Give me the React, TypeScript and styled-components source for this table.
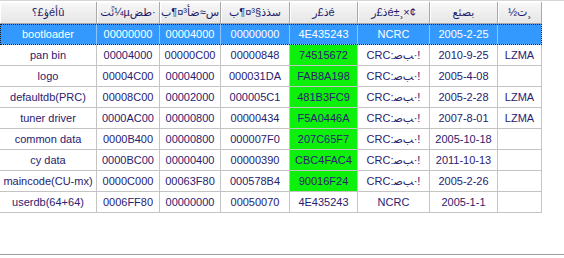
import styled, { createGlobalStyle } from "styled-components";

type Entry = {
  name: string;
  start: string;
  size: string;
  length: string;
  crc: string;
  check: string;
  date: string;
  pack: string;
};

const OK = "CRC:ص\u200Eب·!";

const COLUMNS = [
  "ؤ£؟éأû",
  "ئًت¼µطض·",
  "س≈ضأ³¤¶ب",
  "سذذ§³¤¶ب",
  "ذ£رé",
  "ذ£رé±¸×¢",
  "بصئع",
  "\u200E½\u200Eت\u200E¸",
];

const ENTRIES: Entry[] = [
  { name: "bootloader", start: "00000000", size: "00004000", length: "00000000", crc: "4E435243", check: "NCRC", date: "2005-2-25", pack: "" },
  { name: "pan bin", start: "00004000", size: "00000C00", length: "00000848", crc: "74515672", check: OK, date: "2010-9-25", pack: "LZMA" },
  { name: "logo", start: "00004C00", size: "00004000", length: "000031DA", crc: "FAB8A198", check: OK, date: "2005-4-08", pack: "" },
  { name: "defaultdb(PRC)", start: "00008C00", size: "00002000", length: "000005C1", crc: "481B3FC9", check: OK, date: "2005-2-28", pack: "LZMA" },
  { name: "tuner driver", start: "0000AC00", size: "00000800", length: "00000434", crc: "F5A0446A", check: OK, date: "2007-8-01", pack: "LZMA" },
  { name: "common data", start: "0000B400", size: "00000800", length: "000007F0", crc: "207C65F7", check: OK, date: "2005-10-18", pack: "" },
  { name: "cy data", start: "0000BC00", size: "00000400", length: "00000390", crc: "CBC4FAC4", check: OK, date: "2011-10-13", pack: "" },
  { name: "maincode(CU-mx)", start: "0000C000", size: "00063F80", length: "000578B4", crc: "90016F24", check: OK, date: "2005-2-26", pack: "" },
  { name: "userdb(64+64)", start: "0006FF80", size: "00000000", length: "00050070", crc: "4E435243", check: "NCRC", date: "2005-1-1", pack: "" },
];

const GRID = "97px 63px 61px 69px 68px 72px 68px 44px";

const Global = createGlobalStyle`
  html, body {
    margin: 0;
    padding: 0;
    background: #ffffff;
  }
  body {
    font-family: "Liberation Sans", "DejaVu Sans", sans-serif;
    font-size: 11px;
  }
`;

const ListView = styled.div`
  width: 564px;
  height: 258px;
  display: flex;
  flex-direction: column;
  background: #ffffff;
  overflow: hidden;
`;

const Header = styled.div`
  display: flex;
  height: 24px;
  border-top: 1px solid #d6d6d6;
  padding-top: 1px;
  box-sizing: border-box;
`;

const HeaderCells = styled.div`
  display: grid;
  grid-template-columns: ${GRID};
`;

const HeaderCell = styled.div`
  display: flex;
  align-items: center;
  justify-content: center;
  background: linear-gradient(#f8f8f8, #e6e6e6);
  border-right: 1px solid #a8a8a8;
  border-bottom: 1px solid #a8a8a8;
  box-shadow: inset 1px 1px 0 #ffffff;
  color: #1e1a6a;
  white-space: nowrap;
  overflow: hidden;
`;

const Body = styled.div`
  display: flex;
  flex-direction: column;
  flex: 1;
  margin-bottom: 3px;
  border-bottom: 1px solid #a0a0a0;
`;

const Row = styled.div<{ $selected?: boolean }>`
  position: relative;
  display: grid;
  grid-template-columns: ${GRID};
  width: 542px;
  height: 21px;
  background: ${({ $selected }) => ($selected ? "#3399ff" : "transparent")};
  color: ${({ $selected }) => ($selected ? "#ffffff" : "#2a216f")};

  ${({ $selected }) =>
    $selected &&
    `
    &::after {
      content: "";
      position: absolute;
      inset: 0;
      border: 1px dotted #1a1a1a;
      pointer-events: none;
    }
  `}
`;

const Cell = styled.div<{ $good?: boolean; $selected?: boolean }>`
  display: flex;
  align-items: center;
  justify-content: center;
  white-space: nowrap;
  overflow: hidden;
  border-right: 1px solid ${({ $selected }) => ($selected ? "#8cc4ff" : "#c4c4c4")};
  border-bottom: 1px solid ${({ $selected }) => ($selected ? "#8cc4ff" : "#c4c4c4")};
  background: ${({ $good }) => ($good ? "#0cf00c" : "transparent")};
`;

export default function App() {
  return (
    <>
      <Global />
      <ListView>
        <Header>
          <HeaderCells>
            {COLUMNS.map((title, i) => (
              <HeaderCell key={i}>{title}</HeaderCell>
            ))}
          </HeaderCells>
        </Header>
        <Body>
          {ENTRIES.map((e, i) => {
            const selected = i === 0;
            const good = e.check !== "NCRC";
            return (
              <Row key={e.name} $selected={selected}>
                <Cell $selected={selected}>{e.name}</Cell>
                <Cell $selected={selected}>{e.start}</Cell>
                <Cell $selected={selected}>{e.size}</Cell>
                <Cell $selected={selected}>{e.length}</Cell>
                <Cell $selected={selected} $good={good}>{e.crc}</Cell>
                <Cell $selected={selected}>{e.check}</Cell>
                <Cell $selected={selected}>{e.date}</Cell>
                <Cell $selected={selected}>{e.pack}</Cell>
              </Row>
            );
          })}
        </Body>
      </ListView>
    </>
  );
}
